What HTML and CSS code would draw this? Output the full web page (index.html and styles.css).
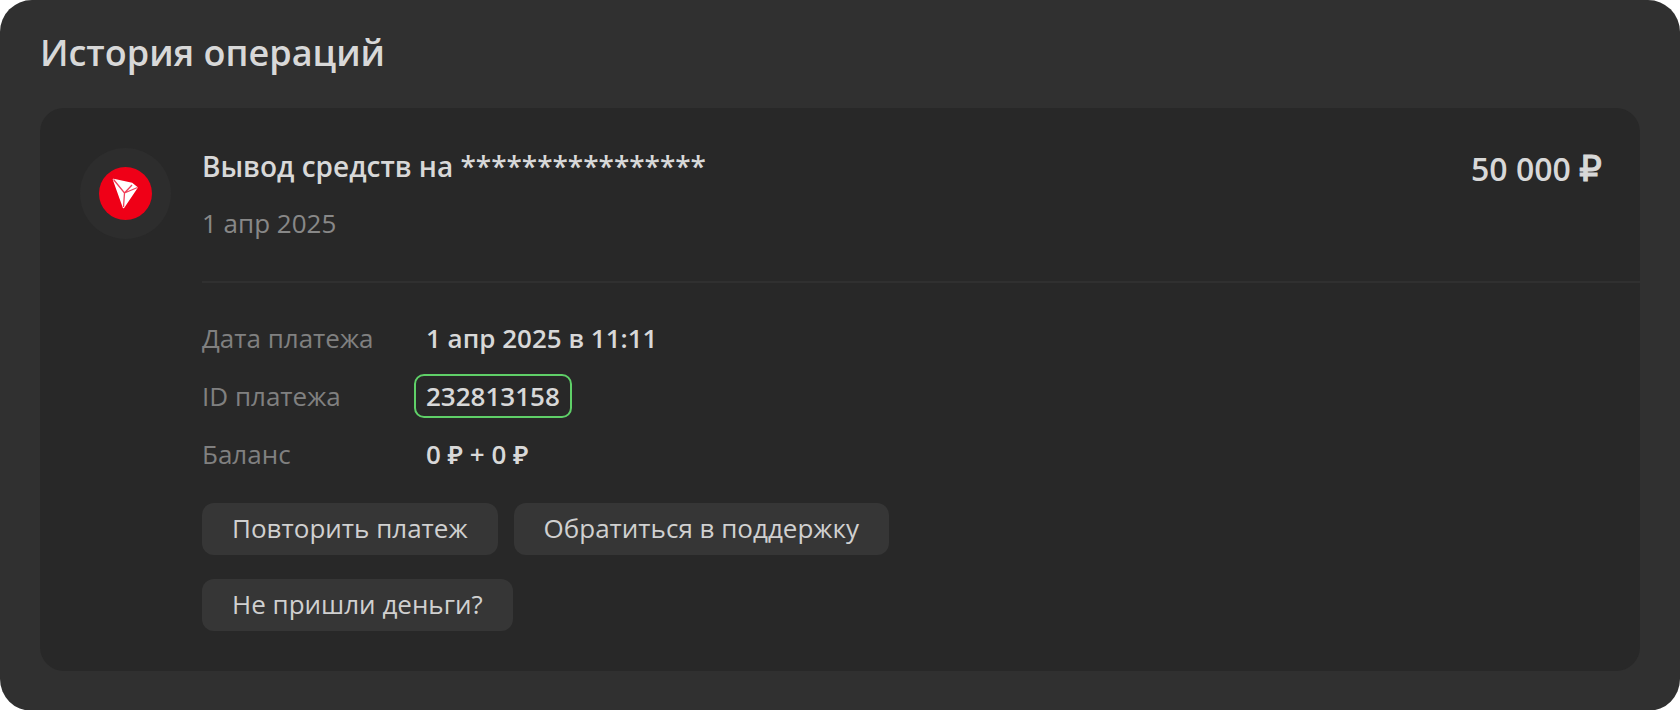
FILE: index.html
```
<!DOCTYPE html>
<html lang="ru">
<head>
<meta charset="utf-8">
<meta name="viewport" content="width=device-width, initial-scale=1">
<title>История операций</title>
<link rel="stylesheet" href="styles.css">
</head>
<body>
<main class="history">
  <h1 class="history-title">История операций</h1>
  <article class="operation">
    <div class="avatar">
      <svg class="avatar-logo" viewBox="0 0 53 53" aria-hidden="true">
        <circle cx="26.500" cy="26.500" r="26.500" fill="#ef0017"/>
        <path d="M14.500 12.500 33 16.500 38 20.500 24.500 40.500Z" fill="#fff" stroke="#fff" stroke-width="1.500" stroke-linejoin="round"/>
        <path d="M14.500 12.500 25.500 26 33 18M25.500 26 24.500 40M25.500 26 38.500 20.500" fill="none" stroke="#f0405a" stroke-width="1.300"/>
      </svg>
    </div>
    <div class="operation-main">
      <header class="summary">
        <div class="summary-text">
          <h2 class="summary-title">Вывод средств на ****************</h2>
          <time class="summary-date" datetime="2025-04-01">1 апр 2025</time>
        </div>
        <span class="amount">50 000 <span class="currency">₽</span></span>
      </header>
      <div class="details">
        <dl class="facts">
          <dt>Дата платежа</dt><dd>1 апр 2025 в 11:11</dd>
          <dt>ID платежа</dt><dd><span class="payment-id">232813158</span></dd>
          <dt>Баланс</dt><dd>0 ₽ + 0 ₽</dd>
        </dl>
        <div class="actions">
          <button class="action" type="button">Повторить платеж</button>
          <button class="action" type="button">Обратиться в поддержку</button>
        </div>
        <div class="actions">
          <button class="action" type="button">Не пришли деньги?</button>
        </div>
      </div>
    </div>
  </article>
</main>
</body>
</html>
```
FILE: styles.css
```
* {
  box-sizing: border-box;
}

body {
  margin: 0;
  background: #fff;
  color: #d8d8d8;
  font-family: "Open Sans", "Noto Sans", sans-serif;
  font-size: 26px;
  line-height: 36px;
}

.history {
  min-height: 100vh;
  padding: 28px 40px 40px;
  border-radius: 32px;
  background: #303030;
}

.history-title {
  margin: 0 0 30px;
  font-size: 36px;
  font-weight: 600;
  line-height: 50px;
}

.operation {
  display: flex;
  gap: 31px;
  padding: 40px 0 40px 40px;
  border-radius: 24px;
  background: #282828;
}

.avatar {
  display: flex;
  flex: none;
  align-items: center;
  justify-content: center;
  width: 91px;
  height: 91px;
  border-radius: 50%;
  background: #2d2d2d;
}

.avatar-logo {
  width: 53px;
  height: 53px;
}

.operation-main {
  flex: 1;
  min-width: 0;
}

.summary {
  display: flex;
  justify-content: space-between;
  gap: 24px;
  padding: 0 38px 40px 0;
  border-bottom: 2px solid #303030;
}

.summary-text {
  display: flex;
  flex-direction: column;
  gap: 21px;
}

.summary-title {
  margin: 0;
  font-size: 28px;
  font-weight: 600;
  line-height: 36px;
}

.summary-date {
  color: #888;
}

.amount {
  font-size: 32px;
  font-weight: 600;
  line-height: 42px;
  white-space: nowrap;
}

.currency {
  font-family: "DejaVu Sans", sans-serif;
  font-size: 36px;
  font-weight: 400;
  line-height: 1;
  -webkit-text-stroke: 1px currentColor;
}

.details {
  display: flex;
  flex-direction: column;
  gap: 24px;
  padding-top: 37px;
}

.facts {
  display: grid;
  grid-template-columns: 224px 1fr;
  row-gap: 22px;
  margin: 0 0 7px;
}

.facts dt {
  color: #808080;
}

.facts dd {
  margin: 0;
  font-weight: 600;
}

.payment-id {
  display: inline-block;
  margin: -4px -12px;
  padding: 2px 10px;
  border: 2px solid #5fd068;
  border-radius: 10px;
}

.actions {
  display: flex;
  flex-wrap: wrap;
  gap: 16px;
}

.action {
  padding: 7px 30px 9px;
  border: 0;
  border-radius: 12px;
  background: #363636;
  color: #d0d0d0;
  font: inherit;
  cursor: pointer;
}
```
